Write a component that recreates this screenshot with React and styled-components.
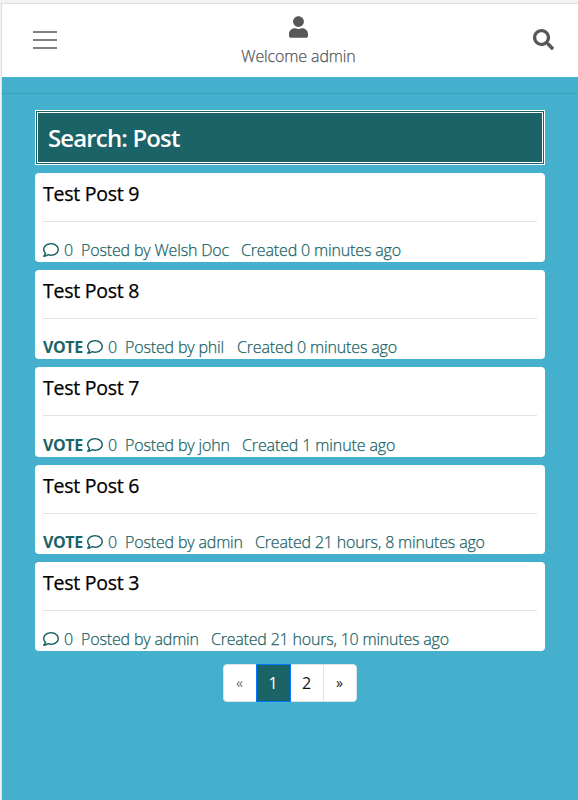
import React from "react";
import styled, { createGlobalStyle } from "styled-components";
import { FaUser, FaSearch, FaRegComment } from "react-icons/fa";

const GlobalStyle = createGlobalStyle`
  *, *::before, *::after { box-sizing: border-box; }
  body {
    margin: 0;
    background: #f1f3f2;
    font-family: "Open Sans", "Noto Sans", sans-serif;
    font-size: 16px;
    line-height: 24px;
  }
`;

const Page = styled.div`
  height: 800px;
  padding: 3px 0 0 1px;
  overflow: hidden;
`;

const Screen = styled.div`
  height: 797px;
  border: solid #dee0df;
  border-width: 1px 0 0 1px;
  background: #44b0cd;
`;

const Header = styled.header`
  display: grid;
  grid-template-columns: 86px 1fr 70px;
  height: 73px;
  background: #fff;
  color: #555759;
`;

const MenuButton = styled.button`
  display: flex;
  flex-direction: column;
  gap: 6px;
  width: 24px;
  margin: 27px 0 0 31px;
  padding: 0;
  border: 0;
  background: none;
  align-self: start;
`;

const MenuBar = styled.span`
  height: 2px;
  background: #808080;
`;

const Account = styled.div`
  display: flex;
  flex-direction: column;
  align-items: center;
  padding: 12px 0 0 1px;
  font-weight: 300;

  svg { width: 19px; height: 22px; margin-right: 1px; }
`;

const Welcome = styled.span`
  margin-top: 6px;
  letter-spacing: -0.12px;
  -webkit-text-stroke: 0.25px currentColor;
`;

const SearchButton = styled.button`
  align-self: start;
  width: 21px;
  height: 21px;
  margin: 25px 0 0 25px;
  padding: 0;
  border: 0;
  background: none;
  color: #555759;

  svg { display: block; width: 21px; height: 21px; }
`;

const Divider = styled.hr`
  height: 1px;
  margin: 16px 0;
  border: 0;
  background: #3d9eb9;
`;

const Content = styled.main`
  margin: 0 33px;
`;

const Heading = styled.h1`
  height: 55px;
  margin: 0 0 8px;
  padding: 10px;
  border: 3px double #fff;
  background: #1b6366;
  color: #fff;
  font-size: 24px;
  font-weight: 600;
  line-height: 30px;
  letter-spacing: -0.86px;
`;

const Card = styled.article`
  height: 89.2px;
  margin-bottom: 8px;
  padding: 8px 8px 0;
  border-radius: 4px;
  background: #fff;
`;

const Title = styled.h2`
  margin: 0;
  color: #000;
  font-size: 19.5px;
  font-weight: 500;
  line-height: 26px;
  letter-spacing: -0.25px;
  -webkit-text-stroke: 0.25px currentColor;
`;

const Rule = styled.hr`
  height: 1px;
  margin: 14px 0 16.15px;
  border: 0;
  background: #e2e3e4;
`;

const Meta = styled.div`
  display: flex;
  align-items: center;
  color: #1b6366;
  font-weight: 300;
  white-space: nowrap;

  svg { width: 16px; height: 16px; margin-right: 5px; }
  span { -webkit-text-stroke: 0.25px currentColor; }
`;

const Vote = styled.a`
  width: 44px;
  font-weight: 700;
  letter-spacing: -0.4px;
`;

const Count = styled.span`
  width: 17px;
`;

const Author = styled.span`
  width: ${(p) => p.$width}px;
  letter-spacing: -0.16px;
`;

const Created = styled.span`
  letter-spacing: ${(p) => p.$tracking}px;
`;

const Pagination = styled.nav`
  display: flex;
  justify-content: center;
  margin-top: 13px;
`;

const PageLink = styled.a`
  width: ${(p) => p.$width || 34}px;
  height: 38px;
  margin-left: -1px;
  padding: 6px 0;
  border: 1px solid ${(p) => (p.$active ? "#007bff" : "#dee2e6")};
  background: ${(p) => (p.$active ? "#1b6366" : "#fff")};
  color: ${(p) => (p.$active ? "#fff" : p.$muted ? "#6c757d" : "#111")};
  position: relative;
  z-index: ${(p) => (p.$active ? 1 : 0)};
  font-size: ${(p) => (p.$arrow ? 14 : 16)}px;
  text-align: center;

  &:first-child { border-radius: 4px 0 0 4px; }
  &:last-child { border-radius: 0 4px 4px 0; }
`;

const posts = [
  { title: "Test Post 9", author: "Welsh Doc", width: 160, age: "0 minutes ago", tracking: -0.15 },
  { title: "Test Post 8", vote: true, author: "phil", width: 112, age: "0 minutes ago", tracking: -0.15 },
  { title: "Test Post 7", vote: true, author: "john", width: 117, age: "1 minute ago", tracking: -0.12 },
  { title: "Test Post 6", vote: true, author: "admin", width: 130, age: "21 hours, 8 minutes ago", tracking: -0.17 },
  { title: "Test Post 3", author: "admin", width: 130, age: "21 hours, 10 minutes ago", tracking: -0.2 },
];

export default function App() {
  return (
    <Page>
      <GlobalStyle />
      <Screen>
        <Header>
          <MenuButton aria-label="Menu">
            <MenuBar />
            <MenuBar />
            <MenuBar />
          </MenuButton>
          <Account>
            <FaUser />
            <Welcome>Welcome admin</Welcome>
          </Account>
          <SearchButton aria-label="Search">
            <FaSearch />
          </SearchButton>
        </Header>
        <Divider />
        <Content>
          <Heading>Search: Post</Heading>
          {posts.map((p) => (
            <Card key={p.title}>
              <Title>{p.title}</Title>
              <Rule />
              <Meta>
                {p.vote && <Vote>VOTE</Vote>}
                <FaRegComment />
                <Count>0</Count>
                <Author $width={p.width}>Posted by {p.author}</Author>
                <Created $tracking={p.tracking}>Created {p.age}</Created>
              </Meta>
            </Card>
          ))}
          <Pagination>
            <PageLink $muted $arrow>«</PageLink>
            <PageLink $active $width={35}>1</PageLink>
            <PageLink>2</PageLink>
            <PageLink $arrow>»</PageLink>
          </Pagination>
        </Content>
      </Screen>
    </Page>
  );
}
